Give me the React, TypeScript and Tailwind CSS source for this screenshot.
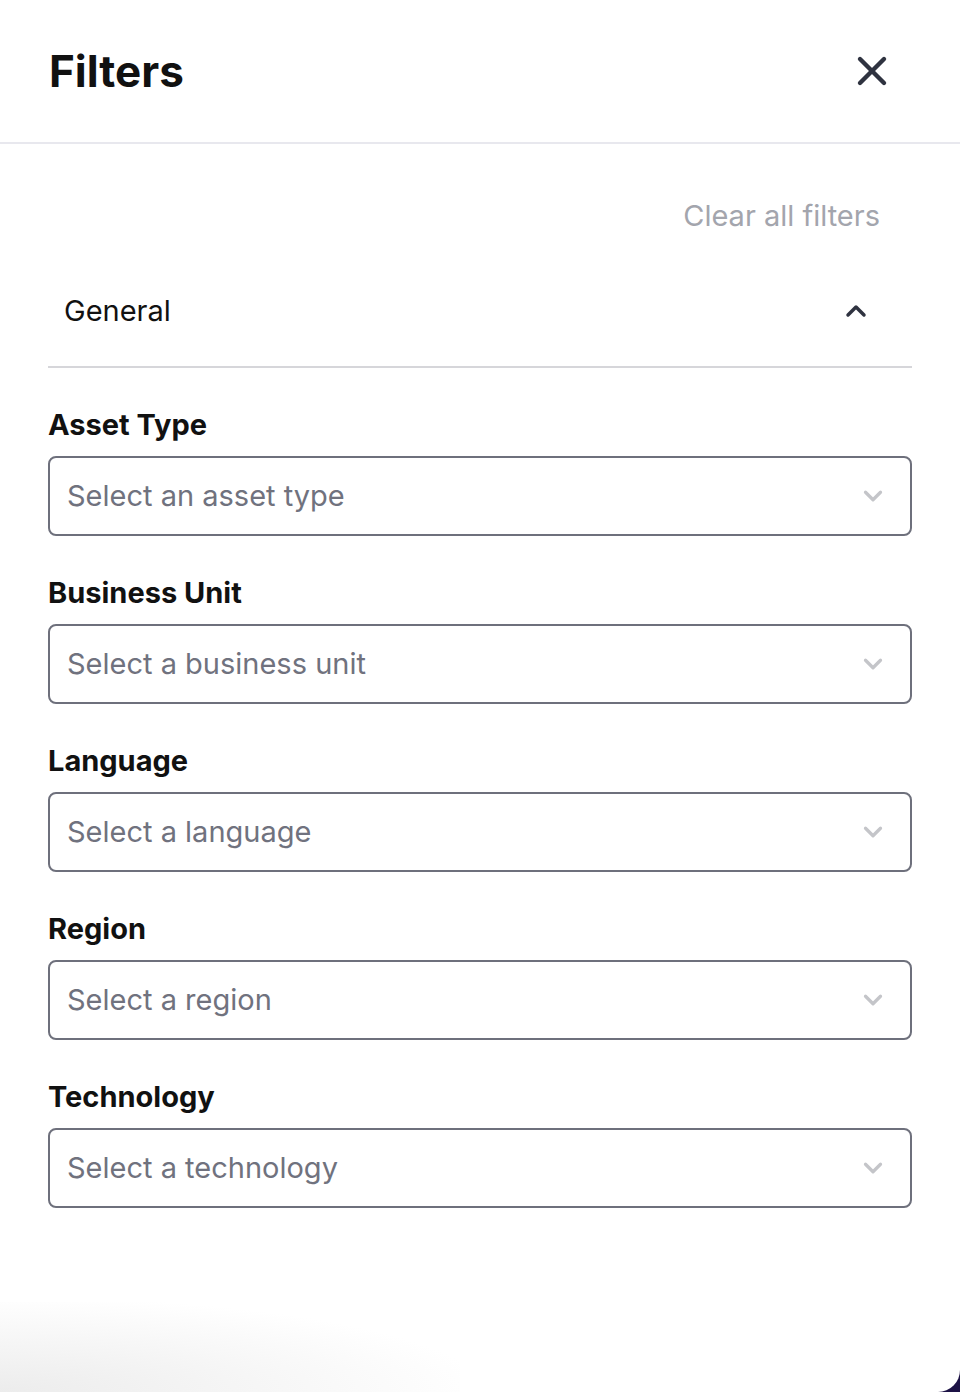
import { X, ChevronUp, ChevronDown } from "lucide-react";

const fields = [
  { label: "Asset Type", placeholder: "Select an asset type" },
  { label: "Business Unit", placeholder: "Select a business unit" },
  { label: "Language", placeholder: "Select a language" },
  { label: "Region", placeholder: "Select a region" },
  { label: "Technology", placeholder: "Select a technology" },
];

function SelectField({ label, placeholder }: { label: string; placeholder: string }) {
  return (
    <div className="flex flex-col gap-[13px]">
      <label className="text-[29px] font-bold leading-[36px] text-[#111]">{label}</label>
      <button
        type="button"
        className="flex h-[80px] w-full items-center justify-between rounded-[8px] border-2 border-[#6e707c] pl-[17px] pr-[22px] text-left"
      >
        <span className="text-[29px] text-[#70727e]">{placeholder}</span>
        <ChevronDown className="size-[30px] text-[#c4c5c9]" strokeWidth={2.6} />
      </button>
    </div>
  );
}

export default function App() {
  return (
    <div className="h-[1392px] w-[960px] bg-[#1c1245]" style={{ fontFamily: "Inter, 'Open Sans', sans-serif" }}>
      <div className="relative flex h-full flex-col overflow-hidden rounded-br-[22px] bg-white">
        <header className="flex h-[144px] shrink-0 items-center justify-between border-b-2 border-[#e8e8ee] pl-[49px] pr-[64px]">
          <h1 className="text-[44px] font-bold text-[#111]">Filters</h1>
          <X className="size-[48px] text-[#2f3340]" strokeWidth={2.2} />
        </header>

        <div className="flex flex-col px-[48px]">
          <div className="flex justify-end pr-[32px] pt-[54px]">
            <button type="button" className="text-[29px] leading-[36px] text-[#a3a5ad]">
              Clear all filters
            </button>
          </div>

          <div className="mt-[22px] flex h-[112px] items-center justify-between border-b-2 border-[#d6d6da] pl-[16px] pr-[40px]">
            <span className="text-[29px] text-[#111]">General</span>
            <ChevronUp className="size-[32px] text-[#2f3340]" strokeWidth={2.6} />
          </div>

          <div className="mt-[39px] flex flex-col gap-[39px]">
            {fields.map((f) => (
              <SelectField key={f.label} label={f.label} placeholder={f.placeholder} />
            ))}
          </div>
        </div>

        <div className="pointer-events-none absolute bottom-0 left-0 h-[90px] w-[460px] bg-[radial-gradient(ellipse_at_bottom_left,#ececec_0%,#f6f6f6_40%,rgba(255,255,255,0)_75%)]" />
      </div>
    </div>
  );
}
